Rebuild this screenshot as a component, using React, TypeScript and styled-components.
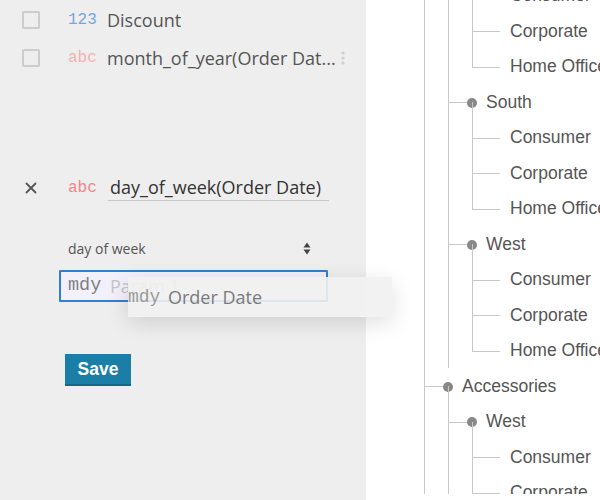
import React from 'react';
import styled, { createGlobalStyle } from 'styled-components';

const ROW = 35.5;
const LINE = '#c8c8c8';

const Global = createGlobalStyle`
  * { box-sizing: border-box; }
  html, body { margin: 0; padding: 0; width: 600px; height: 500px; overflow: hidden; background: #fff; }
  #root { width: 600px; height: 500px; }
`;

const Page = styled.div`
  display: flex;
  width: 600px;
  height: 500px;
  background: #fff;
`;

const Sidebar = styled.div`
  position: relative;
  z-index: 2;
  flex: none;
  width: 366px;
  height: 500px;
  background: #eeeeee;
  padding: 1px 0 0 22px;
  font-family: "Open Sans", "Liberation Sans", sans-serif;
`;

const FieldRow = styled.div`
  display: flex;
  align-items: center;
  height: 38px;
`;

const Checkbox = styled.span`
  flex: none;
  width: 18px;
  height: 18px;
  border: 2px solid #cccccc;
  border-radius: 2px;
  margin-right: 28px;
`;

const TypeTag = styled.span<{ $color: string; $width: number; $size?: number }>`
  flex: none;
  width: ${(p) => p.$width}px;
  font-family: "Liberation Mono", "DejaVu Sans Mono", monospace;
  font-size: ${(p) => p.$size ?? 16}px;
  color: ${(p) => p.$color};
  line-height: 1;
`;

const FieldName = styled.span`
  font-size: 18px;
  color: #555;
  white-space: nowrap;
`;

const Handle = styled.svg`
  margin-left: 5px;
  flex: none;
`;

const EditRow = styled.div`
  display: flex;
  align-items: center;
  height: 34px;
  margin-top: 94px;
`;

const CloseButton = styled.button`
  flex: none;
  width: 46px;
  height: 34px;
  padding: 0 0 0 3px;
  border: none;
  background: transparent;
  display: flex;
  align-items: center;
  cursor: pointer;
`;

const NameInput = styled.div`
  width: 221px;
  height: 26px;
  border-bottom: 1px solid #c8c8c8;
  padding: 0 2px;
  font-size: 18px;
  line-height: 24px;
  color: #333;
  white-space: nowrap;
`;

const SelectBox = styled.div`
  display: flex;
  align-items: center;
  justify-content: space-between;
  width: 268px;
  height: 32px;
  margin: 27px 0 0 38px;
  padding: 0 17px 0 8px;
  font-size: 14px;
  color: #555;
`;

const ParamInput = styled.div`
  display: flex;
  align-items: center;
  width: 269px;
  height: 32px;
  margin: 6px 0 0 37px;
  padding-left: 7px;
  border: 2px solid #2f80d2;
  border-radius: 1px;
  background: #f2f1fb;
`;

const Placeholder = styled.span`
  margin-left: 8px;
  font-size: 18px;
  color: #c4c4c4;
`;

const SaveButton = styled.button`
  display: block;
  width: 66px;
  height: 32px;
  margin: 52px 0 0 43px;
  padding: 0;
  border: none;
  border-bottom: 2px solid #136789;
  background: #1b7ea6;
  color: #fff;
  font-family: "Liberation Sans", Arial, sans-serif;
  font-weight: bold;
  font-size: 17.5px;
`;

const DragGhost = styled.div`
  position: absolute;
  left: 128px;
  top: 277px;
  width: 264px;
  height: 40px;
  display: flex;
  align-items: center;
  background: rgba(241, 241, 241, 0.9);
  box-shadow: 0 6px 22px rgba(0, 0, 0, 0.13);
`;

const GhostLabel = styled.span`
  margin-left: 8px;
  font-size: 18px;
  color: #7a7a7a;
`;

/* ---------- tree ---------- */

const TreePane = styled.div`
  flex: 1;
  height: 494px;
  overflow: hidden;
  background: #fff;
  padding-left: 58px;
  font-family: "Liberation Sans", Arial, sans-serif;
`;

const Branch = styled.ul<{ $root?: boolean; $toLast?: boolean }>`
  position: relative;
  list-style: none;
  margin: ${(p) => (p.$root ? `-93.25px 0 0 0` : `0 0 0 24px`)};
  padding: 0;
  &::before {
    content: '';
    position: absolute;
    left: 0;
    top: ${-ROW / 2}px;
    bottom: ${(p) => (p.$toLast ? ROW / 2 : 0)}px;
    width: 1px;
    background: ${LINE};
  }
`;

const Item = styled.li`
  position: relative;
`;

const NodeRow = styled.div<{ $leaf: boolean }>`
  position: relative;
  display: flex;
  align-items: center;
  height: ${ROW}px;
  padding-left: 38px;
  font-size: 17.5px;
  color: #555;
  white-space: nowrap;
  &::before {
    content: '';
    position: absolute;
    left: 0;
    top: 50%;
    width: ${(p) => (p.$leaf ? 28 : 24)}px;
    height: 1px;
    background: ${LINE};
  }
`;

const Dot = styled.span`
  position: absolute;
  left: 19px;
  top: 50%;
  width: 10px;
  height: 10px;
  margin-top: -4.5px;
  border-radius: 50%;
  background: #888;
`;

type TNode = { label: string; children?: TNode[] };

const segments = (): TNode[] => [
  { label: 'Consumer' },
  { label: 'Corporate' },
  { label: 'Home Office' },
];

const tree: TNode[] = [
  {
    label: 'Appliances',
    children: [
      { label: 'East', children: segments() },
      { label: 'South', children: segments() },
      { label: 'West', children: segments() },
    ],
  },
  {
    label: 'Accessories',
    children: [
      { label: 'West', children: segments() },
      { label: 'Central', children: segments() },
    ],
  },
];

const truncate = (s: string, n: number) => (s.length > n ? `${s.slice(0, n)}...` : s);

const TreeNode: React.FC<{ node: TNode }> = ({ node }) => {
  const leaf = !node.children;
  return (
    <Item>
      <NodeRow $leaf={leaf}>
        {!leaf && <Dot />}
        {node.label}
      </NodeRow>
      {node.children && (
        <Branch $toLast={node.children.every((c) => !c.children)}>
          {node.children.map((c, i) => (
            <TreeNode key={i} node={c} />
          ))}
        </Branch>
      )}
    </Item>
  );
};

const CloseIcon = () => (
  <svg width="12" height="12" viewBox="0 0 12 12">
    <path d="M1.5 1.5 L10.5 10.5 M10.5 1.5 L1.5 10.5" stroke="#555" strokeWidth="1.8" strokeLinecap="round" />
  </svg>
);

const SortIcon = () => (
  <svg width="8" height="13" viewBox="0 0 8 13">
    <path d="M4 0.5 L7.5 5.5 L0.5 5.5 Z" fill="#444" />
    <path d="M4 12.5 L7.5 7.5 L0.5 7.5 Z" fill="#444" />
  </svg>
);

export default function App() {
  return (
    <>
      <Global />
      <Page>
        <Sidebar>
          <FieldRow>
            <Checkbox />
            <TypeTag $color="#74a6e0" $width={39}>123</TypeTag>
            <FieldName>{truncate('Discount', 23)}</FieldName>
          </FieldRow>
          <FieldRow>
            <Checkbox />
            <TypeTag $color="#f6b0b0" $width={39}>abc</TypeTag>
            <FieldName>{truncate('month_of_year(Order Date)', 23)}</FieldName>
            <Handle width="4" height="14" viewBox="0 0 4 14">
              <circle cx="2" cy="2" r="1.6" fill="#cfcfcf" />
              <circle cx="2" cy="7" r="1.6" fill="#cfcfcf" />
              <circle cx="2" cy="12" r="1.6" fill="#cfcfcf" />
            </Handle>
          </FieldRow>

          <EditRow>
            <CloseButton aria-label="remove">
              <CloseIcon />
            </CloseButton>
            <TypeTag $color="#f08585" $width={40}>abc</TypeTag>
            <NameInput>day_of_week(Order Date)</NameInput>
          </EditRow>

          <SelectBox>
            <span>day of week</span>
            <SortIcon />
          </SelectBox>

          <ParamInput>
            <TypeTag $color="#808080" $width={34} $size={18.5}>mdy</TypeTag>
            <Placeholder>Param 1</Placeholder>
          </ParamInput>

          <SaveButton>Save</SaveButton>

          <DragGhost>
            <TypeTag $color="#9a9a9a" $width={32} $size={18}>mdy</TypeTag>
            <GhostLabel>Order Date</GhostLabel>
          </DragGhost>
        </Sidebar>

        <TreePane>
          <Branch $root>
            {tree.map((n, i) => (
              <TreeNode key={i} node={n} />
            ))}
          </Branch>
        </TreePane>
      </Page>
    </>
  );
}
